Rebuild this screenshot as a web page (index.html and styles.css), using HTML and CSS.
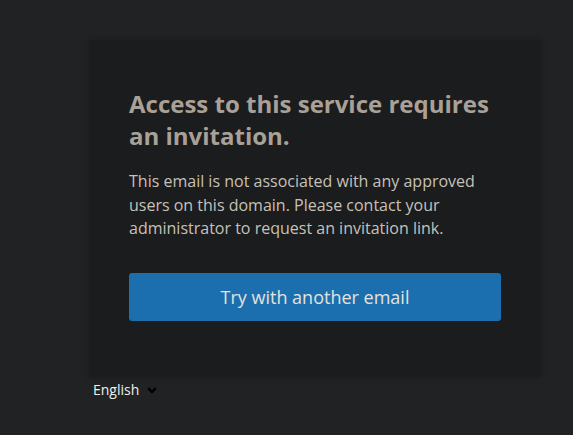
FILE: index.html
```html
<!DOCTYPE html>
<html lang="en">
<head>
<meta charset="utf-8">
<title>Invitation required</title>
<link rel="stylesheet" href="styles.css">
</head>
<body>
<main class="wrap">
  <section class="card">
    <h1 class="title">Access to this service requires an invitation.</h1>
    <p class="text">This email is not associated with any approved users on this domain. Please contact your administrator to request an invitation link.</p>
    <button class="btn" type="button">Try with another email</button>
  </section>
  <div class="lang">
    <span>English</span>
    <svg class="chev" width="10" height="7" viewBox="0 0 10 7" aria-hidden="true"><path d="M1.2 1.2 L5 5 L8.8 1.2" fill="none" stroke="#000" stroke-width="2.4"/></svg>
  </div>
</main>
</body>
</html>
```
FILE: styles.css
```css
html, body {
  margin: 0;
  padding: 0;
  background: #212224;
  font-family: "Open Sans", "Noto Sans", sans-serif;
}
.wrap {
  width: 452px;
  margin-left: 89px;
  padding-top: 40px;
}
.card {
  background: #1b1c1e;
  border-radius: 2px;
  box-shadow: 0 0 6px rgba(0,0,0,0.25);
  padding: 48px 40px 56px;
  height: 337px;
  box-sizing: border-box;
}
.title {
  margin: 0 0 18px;
  font-size: 24px;
  line-height: 32px;
  font-weight: 700;
  color: #a9a197;
}
.text {
  margin: 0 0 32px;
  font-size: 16px;
  line-height: 23.5px;
  color: #c6c1b9;
}
.btn {
  display: block;
  width: 100%;
  height: 48px;
  border: 0;
  border-radius: 3px;
  background: #1b6fae;
  color: #e4e2de;
  font-family: inherit;
  font-size: 18px;
}
.lang {
  display: flex;
  align-items: center;
  gap: 8px;
  padding: 3px 0 0 4px;
  font-size: 14px;
  line-height: 20px;
  color: #eeeeee;
}
.chev { margin-top: 1px; }
```
